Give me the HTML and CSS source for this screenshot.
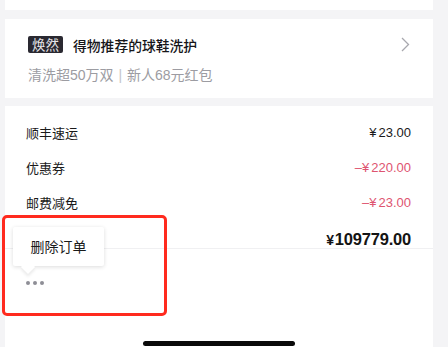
FILE: index.html
```html
<!DOCTYPE html>
<html lang="zh">
<head>
<meta charset="utf-8">
<link rel="stylesheet" href="styles.css">
</head>
<body>
<div class="page">
  <div class="card card-top"></div>

  <div class="card card-service">
    <div class="service-head">
      <span class="tag">焕然</span>
      <span class="service-title">得物推荐的球鞋洗护</span>
      <svg class="chevron" width="9" height="15" viewBox="0 0 9 15"><path d="M1 1 L7.5 7.5 L1 14" fill="none" stroke="#a8a8ae" stroke-width="1.3"/></svg>
    </div>
    <div class="service-sub">清洗超50万双 <span class="bar">|</span> 新人68元红包</div>
  </div>

  <div class="card card-bill">
    <div class="row"><span class="label">顺丰速运</span><span class="val">¥<span class="num">23.00</span></span></div>
    <div class="row"><span class="label">优惠券</span><span class="val red">–¥<span class="num">220.00</span></span></div>
    <div class="row"><span class="label">邮费减免</span><span class="val red">–¥<span class="num">23.00</span></span></div>
    <div class="total"><span class="yen">¥</span>109779.00</div>

    <div class="footer">
      <div class="more">
        <span class="dot"></span><span class="dot"></span><span class="dot"></span>
        <div class="tooltip">删除订单</div>
      </div>
      <div class="home-bar"></div>
    </div>
  </div>
</div>
<div class="highlight"></div>
</body>
</html>
```

FILE: styles.css
```css
html, body {
  margin: 0;
  padding: 0;
}
body {
  width: 448px;
  height: 347px;
  overflow: hidden;
  background: #f4f4f6;
  font-family: "Liberation Sans", "Noto Sans CJK SC", sans-serif;
  color: #1a1a1a;
  position: relative;
}
.page {
  margin-left: 5px;
  width: 428px;
  display: flex;
  flex-direction: column;
}
.card {
  background: #ffffff;
}
.card-top {
  height: 10px;
  margin-bottom: 9px;
}
.card-service {
  height: 79px;
  box-sizing: border-box;
  padding: 17px 23px 0 23px;
  margin-bottom: 8px;
}
.service-head {
  display: flex;
  align-items: center;
  height: 17px;
}
.tag {
  background: #2a2931;
  color: #e6e6ea;
  font-family: "Noto Sans CJK SC", sans-serif;
  font-size: 13.5px;
  line-height: 17px;
  height: 17px;
  padding: 0 4px;
  border-radius: 2px;
}
.service-title {
  margin-left: 10px;
  font-family: "Noto Sans CJK SC", sans-serif;
  font-size: 13.8px;
  font-weight: 500;
  color: #16161a;
  flex: 1;
}
.service-sub {
  margin-top: 12px;
  font-size: 14px;
  line-height: 20px;
  color: #9c9ca2;
}
.bar {
  color: #c4c4c8;
  margin: 0 1px;
}
.card-bill {
  height: 241px;
  padding-top: 9px;
  box-sizing: border-box;
  display: flex;
  flex-direction: column;
}
.row {
  height: 35px;
  display: flex;
  align-items: center;
  justify-content: space-between;
  padding: 0 22px 0 21px;
}
.label {
  font-family: "Noto Sans CJK SC", sans-serif;
  font-size: 13px;
  color: #1a1a1a;
}
.val {
  font-size: 13px;
  color: #1a1a1a;
}
.num {
  margin-left: 2px;
}
.red {
  color: #de5470;
}
.total {
  height: 29px;
  box-sizing: border-box;
  padding: 11px 22px 0 21px;
  text-align: right;
  font-size: 16.5px;
  line-height: 17px;
  font-weight: bold;
  color: #141414;
  letter-spacing: -0.2px;
  border-bottom: 1px solid #f0f0f2;
}
.yen {
  font-size: 14px;
  margin-right: 1px;
}
.footer {
  display: flex;
  flex-direction: column;
  align-items: center;
  padding-top: 32px;
}
.more {
  align-self: flex-start;
  margin-left: 21px;
  display: flex;
  gap: 3px;
  position: relative;
  height: 4px;
}
.dot {
  width: 4px;
  height: 4px;
  border-radius: 50%;
  background: #8e8e96;
}
.tooltip {
  position: absolute;
  left: -13px;
  top: -54px;
  width: 91px;
  height: 39px;
  background: #fff;
  box-shadow: 0 1px 4px rgba(0, 0, 0, 0.14);
  border-radius: 2px;
  font-family: "Noto Sans CJK SC", sans-serif;
  font-size: 14px;
  line-height: 39px;
  text-align: center;
  color: #1a1a1a;
}
.tooltip::after {
  content: "";
  position: absolute;
  left: 10px;
  bottom: -6px;
  width: 10px;
  height: 10px;
  background: #fff;
  transform: rotate(45deg);
  box-shadow: 2px 2px 3px rgba(0, 0, 0, 0.08);
}
.home-bar {
  margin-top: 56px;
  width: 152px;
  height: 5px;
  border-radius: 3px;
  background: #0a0a0a;
}
.highlight {
  position: absolute;
  left: 2px;
  top: 215px;
  width: 159px;
  height: 95px;
  border: 3px solid #ff2a1e;
  border-radius: 5px;
}
```
